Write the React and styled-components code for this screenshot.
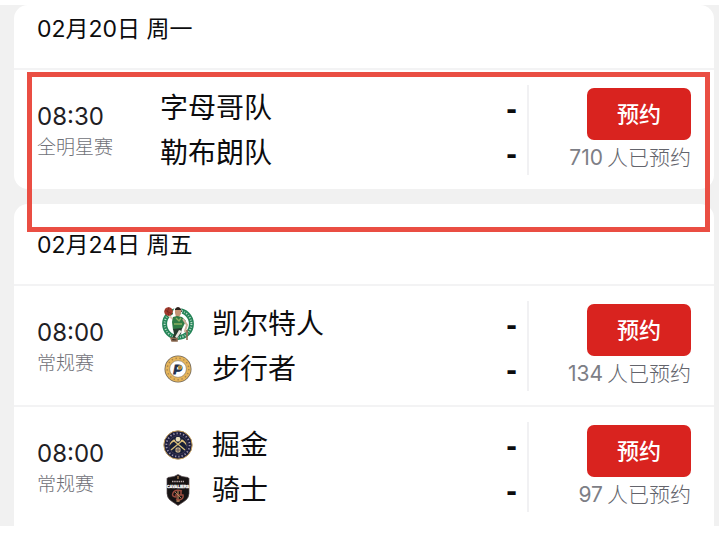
import React from "react";
import styled, { createGlobalStyle } from "styled-components";

const GlobalStyle = createGlobalStyle`
  * { box-sizing: border-box; }
  body {
    margin: 0;
    background: #fff;
    color: #0c0c0e;
    font-family: Inter, "Noto Sans CJK SC", sans-serif;
  }
`;

const Page = styled.main`
  padding: 5px 0 29px;
`;

const Schedule = styled.div`
  position: relative;
  display: flex;
  flex-direction: column;
  gap: 15px;
  padding: 0 5px 0 14px;
  background: #f1f1f1;
`;

const DayCard = styled.section`
  background: #fff;
  border-radius: ${(p) => (p.$continues ? "14px 14px 0 0" : "14px")};
`;

const DayTitle = styled.h2`
  margin: 0;
  padding: ${(p) => (p.$first ? "9px" : "26px")} 23px 24px;
  font-size: 23px;
  line-height: 30px;
  font-weight: 400;
`;

const GameList = styled.ul`
  margin: 0;
  padding: 0;
  list-style: none;
`;

const GameRow = styled.li`
  display: flex;
  border-top: 2px solid #f3f3f4;
  padding: 15px 0 14px 23px;
`;

const When = styled.div`
  width: 123px;
  padding-top: 16px;
`;

const Time = styled.time`
  display: block;
  font-size: 24px;
  line-height: 32px;
  color: #1f2024;
`;

const Stage = styled.div`
  font-size: 19px;
  line-height: 30px;
  font-weight: 300;
  color: #707178;
`;

const Teams = styled.div`
  flex: 1;
`;

const Team = styled.div`
  display: flex;
  align-items: center;
  height: 45px;
  padding-right: 10px;
`;

const Logo = styled.span`
  display: flex;
  justify-content: center;
  width: 36px;
  margin-right: 16px;
`;

const TeamName = styled.span`
  flex: 1;
  font-size: 28px;
  line-height: 44px;
`;

const Score = styled.span`
  font-family: "Liberation Sans", sans-serif;
  font-size: 32px;
  line-height: 40px;
  font-weight: 700;
`;

const Booking = styled.div`
  display: flex;
  flex-direction: column;
  align-items: flex-end;
  width: 187px;
  padding: 3px 23px 0 0;
  border-left: 2px solid #f1f1f3;
`;

const BookButton = styled.button`
  width: 104px;
  height: 52px;
  padding: 0;
  border: 0;
  border-radius: 7px;
  background: #d9231f;
  color: #fff;
  font-family: inherit;
  font-size: 22px;
  line-height: 30px;
  font-weight: 500;
  cursor: pointer;
`;

const Booked = styled.div`
  display: flex;
  gap: 4px;
  font-size: 21px;
  line-height: 35px;
  font-weight: 300;
  color: #63646c;
  white-space: nowrap;
`;

const Count = styled.span`
  font-weight: 400;
  color: #7d7e86;
`;

const Highlight = styled.div`
  position: absolute;
  top: 67px;
  left: 27px;
  right: 9px;
  height: 160px;
  border: 5px solid #ea4e43;
  pointer-events: none;
`;

const CelticsLogo = () => (
  <svg width="34" height="36" viewBox="0 0 34 36" aria-hidden="true">
    <circle cx="17" cy="18" r="13.4" fill="#fff" stroke="#248457" strokeWidth="5" />
    <circle cx="17" cy="18" r="13.4" fill="none" stroke="#b9d9c8" strokeWidth="2" strokeDasharray="1.2 1.6 .8 1.5" />
    <path d="M12 5l2-4h6l1 5-1 5-5 1-3-3z" fill="#fff" />
    <path d="M14 3q3-4 6 0l1 3-7-1z" fill="#2b211c" />
    <path d="M14 4h6v4l-2 3h-3l-1-4z" fill="#c39475" />
    <path d="M7 7l5 5 4-1-2 5-5-4-4-4z" fill="#e2cbb8" />
    <path d="M12 11l4-1 5 1 4 4-2 4-2 4-9 1-1-8z" fill="#2f7b45" />
    <path d="M15 12l3 3 2-3M13 18h8" stroke="#8caf60" strokeWidth="1.4" fill="none" />
    <path d="M22 13l4 6-2 6 2 1" stroke="#ceb29c" strokeWidth="2" fill="none" />
    <path d="M12 23l9-1-1 6-5 5-4-1 2-4z" fill="#263a2d" />
    <path d="M18 24l3 1-5 7-2-1z" fill="#e8e4dc" />
    <path d="M10 32l6 1v2h-5zM26 24v10" stroke="#8c6a50" strokeWidth="1.6" fill="#25221e" />
    <circle cx="7.5" cy="5.5" r="4.3" fill="#a23b2d" />
    <path d="M4 4l7 4M8 1q-3 4 0 9" stroke="#6b211b" strokeWidth=".6" fill="none" />
  </svg>
);

const PacersLogo = () => (
  <svg width="28" height="28" viewBox="0 0 28 28" aria-hidden="true">
    <circle cx="14" cy="14" r="13.5" fill="#706658" />
    <circle cx="14" cy="14" r="12.7" fill="#e6b55a" />
    <circle cx="14" cy="14" r="10.8" fill="none" stroke="#a98550" strokeWidth="1.4" strokeDasharray="1.4 2.6" />
    <circle cx="14" cy="14" r="8.4" fill="#fff" stroke="#7d6b4e" strokeWidth=".6" />
    <text x="13.5" y="18.500" textAnchor="middle" fontFamily="Liberation Sans, sans-serif" fontSize="13" fontWeight="700" fontStyle="italic" fill="#1c3050" stroke="#1c3050" strokeWidth=".8">P</text>
    <circle cx="16" cy="12.500" r="2.200" fill="#d7a449" />
    <path d="M14.500 11.500l3 2M16.500 11l-1 3" stroke="#67563b" strokeWidth=".5" />
  </svg>
);

const NuggetsLogo = () => (
  <svg width="30" height="30" viewBox="0 0 30 30" aria-hidden="true">
    <circle cx="15" cy="15" r="14.200" fill="#1c1e3e" stroke="#c6a05c" strokeWidth="1" />
    <circle cx="15" cy="15" r="11.600" fill="none" stroke="#9990a5" strokeWidth="1.800" strokeDasharray="1.300 2" />
    <circle cx="15" cy="15" r="9.300" fill="#171e37" stroke="#514461" strokeWidth=".6" />
    <path d="M8 20L20 10M22 20L10 10" stroke="#d5bb78" strokeWidth="1.400" />
    <path d="M6.500 16q0-5 5-6.500l1 1.500q-4 1-6 5zM23.500 16q0-5-5-6.500l-1 1.500q4 1 6 5z" fill="#e2c17b" />
    <path d="M12.500 9l1-2h3l1 2-1 2.500h-3z" fill="#e9dfbd" />
    <circle cx="15" cy="20" r="2.700" fill="#c9b28a" />
    <path d="M12.500 20h5M15 17.500v5" stroke="#453a4c" strokeWidth=".7" />
  </svg>
);

const CavaliersLogo = () => (
  <svg width="24" height="32" viewBox="0 0 24 32" aria-hidden="true">
    <path d="M12 .5l4 2 6 1 1 1v15q0 5-5 8l-6 4-6-4q-5-3-5-8v-15l1-1 6-1z" fill="#171314" stroke="#54474a" strokeWidth=".7" />
    <path d="M6 7.500h12" stroke="#b9aaa8" strokeWidth="1.500" strokeDasharray="1.500 .7" />
    <text x="12" y="13.500" textAnchor="middle" fontFamily="Liberation Sans, sans-serif" fontSize="4" fontWeight="700" fill="#fff" stroke="#fff" strokeWidth=".3">CAVALIERS</text>
    <path d="M12 2v3M12 16v12" stroke="#b98a5b" strokeWidth="1.200" />
    <path d="M16 17q-7-2-9 2t4 4M9 21h8q1 4-4 5l-3-1M15 17v4" stroke="#9a4b3e" strokeWidth="1.500" fill="none" />
    <path d="M9 18l6 6M10 27h4" stroke="#c99b6b" strokeWidth=".8" />
  </svg>
);

const days = [
  {
    title: "02月20日 周一",
    games: [
      { time: "08:30", stage: "全明星赛", booked: 710, teams: [{ name: "字母哥队" }, { name: "勒布朗队" }] },
    ],
  },
  {
    title: "02月24日 周五",
    games: [
      {
        time: "08:00",
        stage: "常规赛",
        booked: 134,
        teams: [
          { name: "凯尔特人", Mark: CelticsLogo },
          { name: "步行者", Mark: PacersLogo },
        ],
      },
      {
        time: "08:00",
        stage: "常规赛",
        booked: 97,
        teams: [
          { name: "掘金", Mark: NuggetsLogo },
          { name: "骑士", Mark: CavaliersLogo },
        ],
      },
    ],
  },
];

function Game({ time, stage, booked, teams }) {
  return (
    <GameRow>
      <When>
        <Time>{time}</Time>
        <Stage>{stage}</Stage>
      </When>
      <Teams>
        {teams.map(({ name, Mark }) => (
          <Team key={name}>
            {Mark && (
              <Logo>
                <Mark />
              </Logo>
            )}
            <TeamName>{name}</TeamName>
            <Score>-</Score>
          </Team>
        ))}
      </Teams>
      <Booking>
        <BookButton type="button">预约</BookButton>
        <Booked>
          <Count>{booked}</Count>
          <span>人已预约</span>
        </Booked>
      </Booking>
    </GameRow>
  );
}

export default function App() {
  return (
    <Page lang="zh-CN">
      <GlobalStyle />
      <Schedule>
        {days.map((day, i) => (
          <DayCard key={day.title} $continues={i === days.length - 1}>
            <DayTitle $first={i === 0}>{day.title}</DayTitle>
            <GameList>
              {day.games.map((game) => (
                <Game key={game.teams[0].name} {...game} />
              ))}
            </GameList>
          </DayCard>
        ))}
        <Highlight />
      </Schedule>
    </Page>
  );
}
